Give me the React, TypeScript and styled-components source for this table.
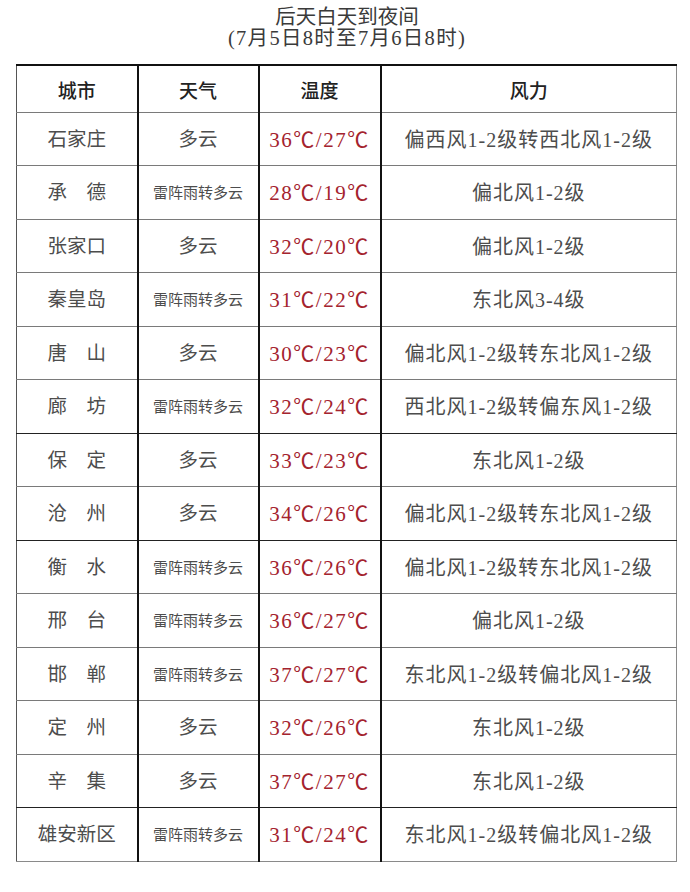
import React from "react";
import styled, { createGlobalStyle } from "styled-components";

const Global = createGlobalStyle`
  html, body { margin: 0; padding: 0; background: #ffffff; }
  body { font-family: "Liberation Serif", "Noto Sans CJK SC", serif; }
`;

const Page = styled.div`
  width: 690px;
  height: 892px;
  box-sizing: border-box;
  padding: 7px 14px 0 16px;
  display: flex;
  flex-direction: column;
  align-items: stretch;
`;

const Heading = styled.div`
  display: flex;
  flex-direction: column;
  align-items: center;
  color: #3a3a3a;
  font-size: 20.5px;
  line-height: 21px;
  font-family: "Liberation Serif", "Noto Sans CJK SC", serif;
  margin-bottom: 15px;
  padding-left: 2px;
`;

const TitleLine = styled.div<{ $spacing?: number }>`
  letter-spacing: ${(p) => p.$spacing ?? 0}px;
  white-space: nowrap;
`;

const Table = styled.table`
  width: 660px;
  border-collapse: collapse;
  table-layout: fixed;
  border-top: 2px solid #111;
  border-left: 1px solid #555;
  border-right: 1px solid #8a8a8a;
  border-bottom: 1px solid #8a8a8a;
`;

const Col = styled.col<{ $w: number }>`
  width: ${(p) => p.$w}px;
`;

const HeadCell = styled.th<{ $first?: boolean }>`
  height: 46px;
  padding: 0;
  text-align: center;
  vertical-align: middle;
  font-weight: 500;
  font-size: 19px;
  color: #222;
  border-left: ${(p) => (p.$first ? "none" : "2px solid #111")};
`;

const Row = styled.tr<{ $dark?: boolean; $tall?: boolean }>`
  height: ${(p) => (p.$tall ? 54 : 53)}px;
  border-top: 1px solid ${(p) => (p.$dark ? "#222" : "#7a7a7a")};
`;

const Cell = styled.td<{ $first?: boolean; $kind?: "small" | "temp" | "wind" | "normal" }>`
  padding: 0;
  text-align: center;
  vertical-align: middle;
  border-left: ${(p) => (p.$first ? "none" : "2px solid #111")};
  color: ${(p) => (p.$kind === "temp" ? "#a4232e" : "#4d4d4d")};
  font-size: ${(p) =>
    p.$kind === "small" ? "15px" : p.$kind === "temp" ? "21px" : p.$kind === "wind" ? "20px" : "19.5px"};
  letter-spacing: ${(p) => (p.$kind === "temp" ? "1.5px" : p.$kind === "wind" ? "1px" : "0")};
  line-height: 24px;
  white-space: nowrap;
  padding-top: 1px;
`;

type R = [string, string, string, string, string];

const rows: R[] = [
  ["石家庄", "多云", "36", "27", "偏西风1-2级转西北风1-2级"],
  ["承　德", "雷阵雨转多云", "28", "19", "偏北风1-2级"],
  ["张家口", "多云", "32", "20", "偏北风1-2级"],
  ["秦皇岛", "雷阵雨转多云", "31", "22", "东北风3-4级"],
  ["唐　山", "多云", "30", "23", "偏北风1-2级转东北风1-2级"],
  ["廊　坊", "雷阵雨转多云", "32", "24", "西北风1-2级转偏东风1-2级"],
  ["保　定", "多云", "33", "23", "东北风1-2级"],
  ["沧　州", "多云", "34", "26", "偏北风1-2级转东北风1-2级"],
  ["衡　水", "雷阵雨转多云", "36", "26", "偏北风1-2级转东北风1-2级"],
  ["邢　台", "雷阵雨转多云", "36", "27", "偏北风1-2级"],
  ["邯　郸", "雷阵雨转多云", "37", "27", "东北风1-2级转偏北风1-2级"],
  ["定　州", "多云", "32", "26", "东北风1-2级"],
  ["辛　集", "多云", "37", "27", "东北风1-2级"],
  ["雄安新区", "雷阵雨转多云", "31", "24", "东北风1-2级转偏北风1-2级"],
];

const darkRows = new Set([6, 8, 13]);

export default function App() {
  return (
    <>
      <Global />
      <Page>
        <Heading>
          <TitleLine>后天白天到夜间</TitleLine>
          <TitleLine $spacing={1.3}>(7月5日8时至7月6日8时)</TitleLine>
        </Heading>
        <Table>
          <colgroup>
            <Col $w={121} />
            <Col $w={121} />
            <Col $w={122} />
            <Col $w={296} />
          </colgroup>
          <thead>
            <tr>
              <HeadCell $first>城市</HeadCell>
              <HeadCell>天气</HeadCell>
              <HeadCell>温度</HeadCell>
              <HeadCell>风力</HeadCell>
            </tr>
          </thead>
          <tbody>
            {rows.map((r, i) => (
              <Row key={i} $dark={darkRows.has(i)} $tall={i % 2 === 1}>
                <Cell $first>{r[0]}</Cell>
                <Cell $kind={r[1].length > 2 ? "small" : "normal"}>{r[1]}</Cell>
                <Cell $kind="temp">
                  {r[2]}℃/{r[3]}℃
                </Cell>
                <Cell $kind="wind">{r[4]}</Cell>
              </Row>
            ))}
          </tbody>
        </Table>
      </Page>
    </>
  );
}
